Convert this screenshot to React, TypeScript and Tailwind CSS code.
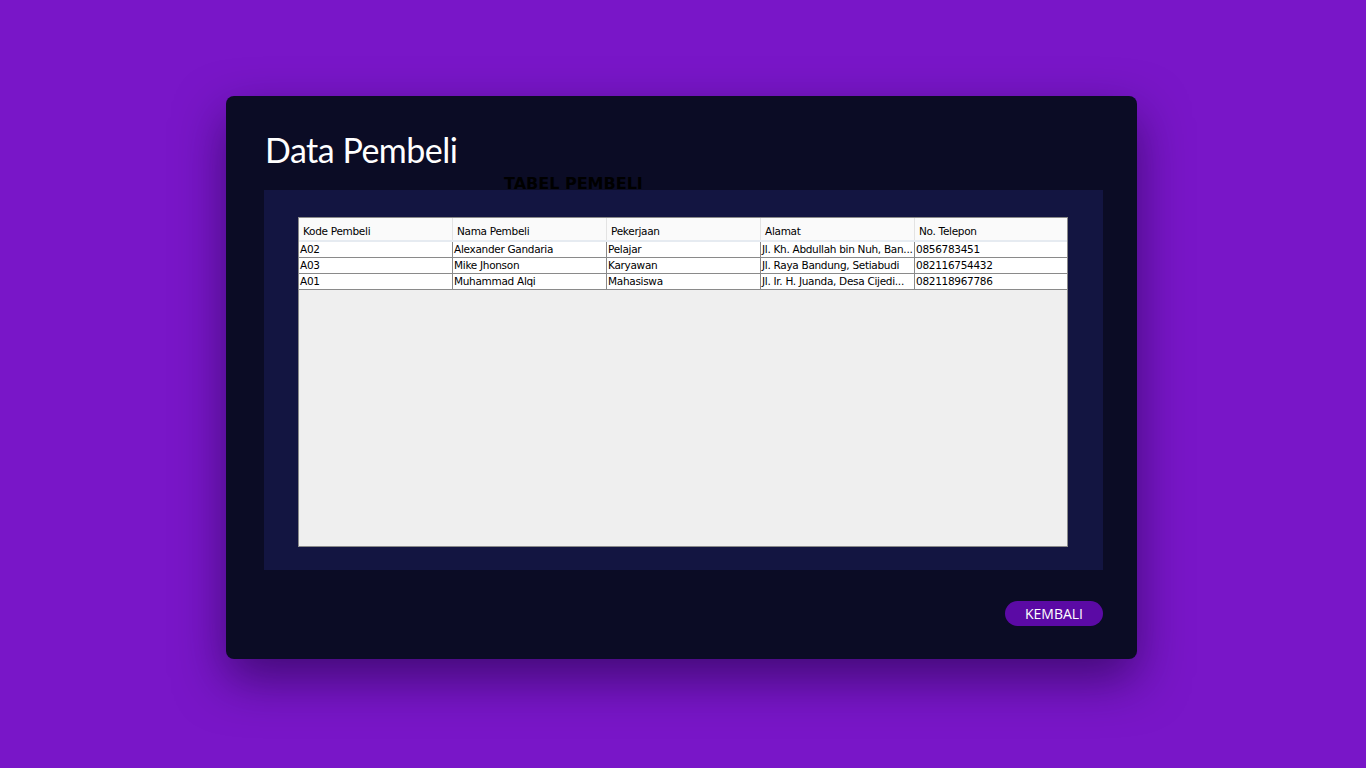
import React from "react";

const cols = ["Kode Pembeli", "Nama Pembeli", "Pekerjaan", "Alamat", "No. Telepon"];
const rows = [
  ["A02", "Alexander Gandaria", "Pelajar", "Jl. Kh. Abdullah bin Nuh, Ban...", "0856783451"],
  ["A03", "Mike Jhonson", "Karyawan", "Jl. Raya Bandung, Setiabudi", "082116754432"],
  ["A01", "Muhammad Alqi", "Mahasiswa", "Jl. Ir. H. Juanda, Desa Cijedi...", "082118967786"],
];

export default function App() {
  return (
    <div className="w-[1366px] h-[768px] bg-[#7916c8] flex items-start justify-start pl-[226px] pt-[96px] overflow-hidden">
      <div className="w-[911px] h-[563px] bg-[#0b0c25] rounded-[8px] shadow-[0_20px_50px_rgba(20,0,50,0.55)] flex flex-col pl-[38px] pr-[34px]">
        <div className="relative h-[94px]">
          <h1
            className="absolute left-[1px] top-[32px] text-[34px] leading-[44px] tracking-[-0.5px] text-white"
            style={{ fontFamily: "Lato, 'Open Sans', sans-serif" }}
          >
            Data Pembeli
          </h1>
          <div
            className="absolute left-[240px] top-[78px] text-[16px] leading-[20px] font-bold text-black"
            style={{ fontFamily: "'DejaVu Sans', sans-serif" }}
          >
            TABEL PEMBELI
          </div>
        </div>
        <div className="h-[380px] bg-[#131541] pt-[27px] pl-[34px]">
          <div
            className="w-[770px] h-[330px] border border-[#8a8a8a] bg-[#efefef] text-[11px] text-black"
            style={{ fontFamily: "'DejaVu Sans', Tahoma, sans-serif" }}
          >
            <div className="flex h-[24px] bg-[#fafafa] border-b-[2px] border-[#e6ebf1]">
              {cols.map((c, i) => (
                <div
                  key={c}
                  className={`w-[154px] shrink-0 pl-[4px] pt-[6px] leading-[14px] text-[10.5px] tracking-[-0.3px] ${i < 4 ? "border-r border-[#e3e3e3]" : ""}`}
                >
                  {c}
                </div>
              ))}
            </div>
            {rows.map((r, ri) => (
              <div key={ri} className="flex h-[16px] bg-white border-b border-[#8a8a8a]">
                {r.map((v, i) => (
                  <div
                    key={i}
                    className={`w-[154px] shrink-0 pl-[1px] leading-[15px] whitespace-nowrap overflow-hidden text-[10.5px] tracking-[-0.3px] ${i < 4 ? "border-r border-[#8a8a8a]" : ""}`}
                  >
                    {v}
                  </div>
                ))}
              </div>
            ))}
          </div>
        </div>
        <div className="flex justify-end pt-[31px]">
          <button
            className="w-[98px] h-[25px] rounded-full bg-[#5b0aa5] text-white text-[14px] leading-[25px]"
            style={{ fontFamily: "'Open Sans', sans-serif" }}
          >
            KEMBALI
          </button>
        </div>
      </div>
    </div>
  );
}
